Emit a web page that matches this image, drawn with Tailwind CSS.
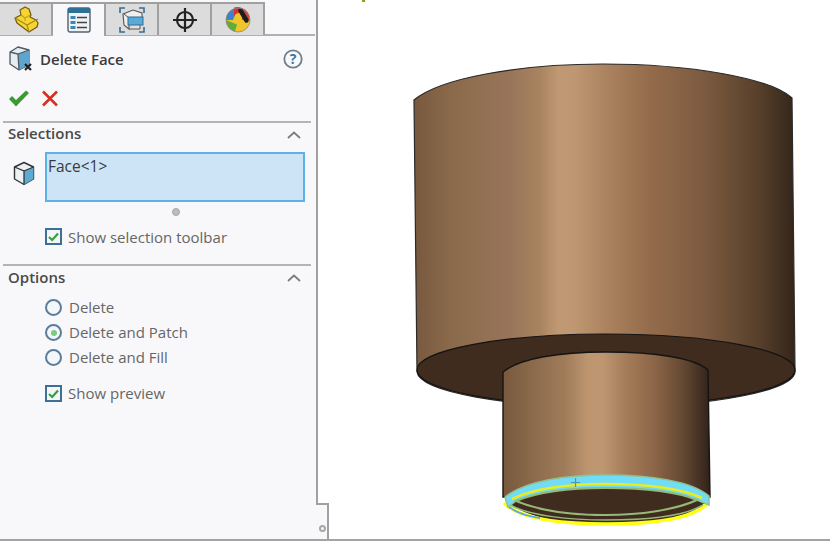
<!DOCTYPE html>
<html lang="en">
<head>
    <meta charset="UTF-8">
    <title>Delete Face</title>
    <script src="https://cdn.jsdelivr.net/npm/@tailwindcss/browser@4"></script>
</head>
<body class="bg-white">
    <div class="w-[830px] h-[541px] flex overflow-hidden border-b-2 border-[#a3a3a3] font-['Open_Sans','Noto_Sans',sans-serif] text-[#4a4a4a]">
        <!-- property manager -->
        <div class="w-[329px] flex flex-col shrink-0">
            <aside class="w-[318px] h-[503px] bg-[#f8f8fa] border-r-2 border-[#a0a0a0]">
                <!-- tabs -->
                <div class="h-[36px] pt-[2px] mr-[1px] flex border-b-2 border-[#b0b0b0]">
                    <div class="w-[53px] h-[33px] flex items-center justify-center bg-[#dcdcdc] border-t-2 border-r-2 border-[#a0a0a0]">
                        <svg width="26" height="27" viewBox="0 0 26 27"><path d="M2 12 L8 9 L7 4 L12 1 L16 3 L18 9 L17 11 L23 14 L25 17 L24 21 L16 26 L4 17 Z" fill="#f6d431" stroke="#6e5a12" stroke-width="1.2" stroke-linejoin="round"/><path d="M2 12 L14 19 L25 13 M14 19 L16 26" fill="none" stroke="#a98a16" stroke-width="1.2"/><path d="M8 9 L12 12 L17 9 M12 12 L12 15" fill="none" stroke="#c4a31e" stroke-width="1.2"/></svg>
                    </div>
                    <div class="w-[53px] h-[34px] flex items-center justify-center bg-[#f8f8fa] border-t-2 border-r-2 border-[#a0a0a0] relative z-10">
                        <svg width="24" height="26" viewBox="0 0 24 26"><rect x="1" y="1" width="22" height="24" rx="2" fill="#eef2f5" stroke="#55626c" stroke-width="1.4"/><rect x="1" y="1" width="22" height="5" fill="#2f6f96"/><rect x="3.500" y="9" width="5" height="3" fill="#3d86b5"/><rect x="3.500" y="14" width="5" height="3" fill="#3d86b5"/><rect x="3.500" y="19" width="5" height="3" fill="#3d86b5"/><path d="M10 10.500h10M10 15.500h10M10 20.500h10" stroke="#444" stroke-width="1.500"/></svg>
                    </div>
                    <div class="w-[53px] h-[33px] flex items-center justify-center bg-[#dcdcdc] border-t-2 border-r-2 border-[#a0a0a0]">
                        <svg width="26" height="26" viewBox="0 0 26 26"><path d="M1 6V1h5M20 1h5v5M25 20v5h-5M6 25H1v-5" fill="none" stroke="#2f6f96" stroke-width="1.6"/><path d="M4 7 L14 3 L23 6 L23 11 L10 11 L10 22 L5 18 Z" fill="#efefef" stroke="#555" stroke-width="1.1"/><path d="M5 7 L10 11" stroke="#555"/><path d="M10 22 L21 22 L21 18" fill="#e4e4e4" stroke="#555"/><rect x="9" y="10" width="15" height="8" fill="#5aa9d8" stroke="#2f6f96"/></svg>
                    </div>
                    <div class="w-[53px] h-[33px] flex items-center justify-center bg-[#dcdcdc] border-t-2 border-r-2 border-[#a0a0a0]">
                        <svg width="26" height="26" viewBox="0 0 26 26"><circle cx="13" cy="13" r="8" fill="none" stroke="#222" stroke-width="2.2"/><path d="M13 1v24M1 13h24" stroke="#222" stroke-width="2.2"/></svg>
                    </div>
                    <div class="w-[53px] h-[33px] flex items-center justify-center bg-[#dcdcdc] border-t-2 border-r-2 border-[#a0a0a0]">
                        <svg width="26" height="26" viewBox="0 0 26 26"><circle cx="13" cy="13" r="12" fill="#efc52a"/><path d="M13 1a12 12 0 0 0-12 12h7z" fill="#3f82cf"/><path d="M1 13a12 12 0 0 0 9 11.600l2-7z" fill="#5fae3b"/><path d="M9 9a6 6 0 0 1 5-3l3-5a12 12 0 0 0-8-.4z" fill="#d8322c"/><path d="M17 1a12 12 0 0 1 8 12l-8 0z" fill="#d8443c"/><path d="M15.500 3.500l6 10" stroke="#1d1d1d" stroke-width="4.500" stroke-linecap="round"/><circle cx="13" cy="13" r="12" fill="none" stroke="#888" stroke-width=".8"/></svg>
                    </div>
                </div>
                <!-- title -->
                <div class="h-[46px] pl-[8px] pr-[13px] flex items-center">
                    <svg width="25" height="26" viewBox="0 0 25 26"><path d="M2 6 L10 1 L21 4 L21 19 L11 24 L2 18 Z" fill="#e6ecef" stroke="#4b5a64" stroke-width="1.300" stroke-linejoin="round"/><path d="M10 8 L21 4 L21 19 L11 24 Z" fill="#5fa4cd"/><path d="M2 6 L10 8 L11 24 M10 8 L21 4" fill="none" stroke="#4b5a64" stroke-width="1.300"/><path d="M17 18l6 6M23 18l-6 6" stroke="#222" stroke-width="2.200"/></svg>
                    <span class="ml-[7px] text-[15px] font-semibold text-[#3d3d3d]">Delete Face</span>
                    <svg class="ml-auto" width="20" height="20" viewBox="0 0 20 20"><circle cx="10" cy="10" r="8.700" fill="#f7f9fb" stroke="#6d7f8c" stroke-width="1.800"/><text x="10" y="15" text-anchor="middle" font-size="14" font-weight="700" fill="#3f76a6" font-family="Open Sans">?</text></svg>
                </div>
                <!-- ok / cancel -->
                <div class="h-[33px] pl-[8px] flex items-center gap-[12px]">
                    <svg width="21" height="17" viewBox="0 0 21 17"><path d="M1 9 L4 6 L8 10 L18 0.500 L21 3 L8 16.500 Z" fill="#3d9a32"/></svg>
                    <svg width="18" height="17" viewBox="0 0 18 17"><path d="M2 1.500 L16 15.500 M16 1.500 L2 15.500" stroke="#d8301e" stroke-width="2.600"/></svg>
                </div>
                <!-- selections -->
                <section class="mt-[6px] ml-[3px] mr-[5px] border-t-2 border-[#b4b4b4]">
                    <div class="h-[21px] pl-[5px] pr-[10px] flex items-center justify-between">
                        <h2 class="text-[15px] font-semibold text-[#4a4a4a]">Selections</h2>
                        <svg class="mt-[3px]" width="14" height="8" viewBox="0 0 14 8"><path d="M1 7 L7 1.500 L13 7" fill="none" stroke="#7b7b7b" stroke-width="1.700"/></svg>
                    </div>
                    <div class="mt-[8px] flex">
                        <svg class="ml-[10px] mt-[9px]" width="22" height="25" viewBox="0 0 22 25"><path d="M1.500 6 L11 1.500 L20.500 6 L20.500 18 L11 23.500 L1.500 18 Z" fill="#eef1f3" stroke="#333" stroke-width="1.400" stroke-linejoin="round"/><path d="M11 10 L20.500 6 L20.500 18 L11 23.500 Z" fill="#5fa9d3"/><path d="M1.500 6 L11 10 L11 23.500 M11 10 L20.500 6" fill="none" stroke="#333" stroke-width="1.300"/></svg>
                        <div class="ml-[10px] w-[260px] h-[50px] bg-[#cde4f7] border-2 border-[#5cb1e6] pl-[1px] text-[15.500px] leading-[25px] text-[#3a3a3a]">Face&lt;1&gt;</div>
                    </div>
                    <div class="h-[20px] flex items-center justify-center pl-[38px]">
                        <div class="w-[8px] h-[8px] rounded-full bg-[#bcbcbc] border border-[#a5a5a5]"></div>
                    </div>
                    <label class="mt-[6px] ml-[42px] h-[17px] flex items-center gap-[6px]">
                        <span class="w-[17px] h-[17px] flex items-center justify-center bg-[#f2f6f9] border-2 border-[#3e6f96]">
                            <svg width="11" height="10" viewBox="0 0 11 10"><path d="M1 5 L4.200 8 L10 1.500" fill="none" stroke="#35a03a" stroke-width="2.200"/></svg>
                        </span>
                        <span class="pt-[2px] text-[15px] text-[#666] whitespace-nowrap">Show selection toolbar</span>
                    </label>
                </section>
                <!-- options -->
                <section class="mt-[19px] ml-[3px] mr-[5px] border-t-2 border-[#b4b4b4]">
                    <div class="h-[23px] pl-[5px] pr-[10px] flex items-center justify-between">
                        <h2 class="text-[15px] font-semibold text-[#4a4a4a]">Options</h2>
                        <svg width="14" height="8" viewBox="0 0 14 8"><path d="M1 7 L7 1.500 L13 7" fill="none" stroke="#7b7b7b" stroke-width="1.700"/></svg>
                    </div>
                    <div class="mt-[6px] ml-[42px]">
                        <label class="h-[25px] flex items-center gap-[7px]">
                            <span class="w-[17px] h-[17px] rounded-full bg-[#f4f7fa] border-2 border-[#5a7d9c]"></span>
                            <span class="text-[15px] text-[#666]">Delete</span>
                        </label>
                        <label class="h-[25px] flex items-center gap-[7px]">
                            <span class="w-[17px] h-[17px] rounded-full bg-[#f4f7fa] border-2 border-[#5a7d9c] flex items-center justify-center">
                                <span class="w-[6px] h-[6px] rounded-full bg-[#7ccb7e]"></span>
                            </span>
                            <span class="text-[15px] text-[#666]">Delete and Patch</span>
                        </label>
                        <label class="h-[25px] flex items-center gap-[7px]">
                            <span class="w-[17px] h-[17px] rounded-full bg-[#f4f7fa] border-2 border-[#5a7d9c]"></span>
                            <span class="text-[15px] text-[#666]">Delete and Fill</span>
                        </label>
                        <label class="mt-[15px] h-[17px] flex items-center gap-[6px]">
                            <span class="w-[17px] h-[17px] flex items-center justify-center bg-[#f2f6f9] border-2 border-[#3e6f96]">
                                <svg width="11" height="10" viewBox="0 0 11 10"><path d="M1 5 L4.200 8 L10 1.500" fill="none" stroke="#35a03a" stroke-width="2.200"/></svg>
                            </span>
                            <span class="text-[15px] text-[#666]">Show preview</span>
                        </label>
                    </div>
                </section>
            </aside>
            <!-- resize corner -->
            <div class="flex-1 flex">
                <div class="w-[316px] bg-[#f8f8fa]"></div>
                <div class="w-[13px] bg-[#f8f8fa] border-t-2 border-r-2 border-[#a0a0a0] flex items-end justify-end pr-[1px] pb-[7px]">
                    <div class="w-[7px] h-[7px] rounded-full border-2 border-[#a8a8a8]"></div>
                </div>
            </div>
        </div>

        <!-- graphics area -->
        <main class="flex-1">
            <svg width="501" height="539" viewBox="329 0 501 539" class="block">
                <defs>
                    <linearGradient id="big" gradientUnits="userSpaceOnUse" x1="414" y1="0" x2="794" y2="0">
                        <stop offset="0" stop-color="#78593e"/>
                        <stop offset=".1" stop-color="#8b6a4b"/>
                        <stop offset=".25" stop-color="#98755a"/>
                        <stop offset=".33" stop-color="#a88360"/>
                        <stop offset=".38" stop-color="#c09873"/>
                        <stop offset=".42" stop-color="#bf9873"/>
                        <stop offset=".5" stop-color="#ac8461"/>
                        <stop offset=".62" stop-color="#946c4c"/>
                        <stop offset=".76" stop-color="#7d5b40"/>
                        <stop offset=".9" stop-color="#59412c"/>
                        <stop offset="1" stop-color="#35261a"/>
                    </linearGradient>
                    <linearGradient id="small" gradientUnits="userSpaceOnUse" x1="503" y1="0" x2="710" y2="0">
                        <stop offset="0" stop-color="#78593e"/>
                        <stop offset=".14" stop-color="#8b6a4b"/>
                        <stop offset=".3" stop-color="#a07c5a"/>
                        <stop offset=".41" stop-color="#bd9670"/>
                        <stop offset=".48" stop-color="#be9772"/>
                        <stop offset=".58" stop-color="#a87f5c"/>
                        <stop offset=".74" stop-color="#8a6446"/>
                        <stop offset=".88" stop-color="#604631"/>
                        <stop offset="1" stop-color="#30221a"/>
                    </linearGradient>
                </defs>
                <!-- upper cylinder -->
                <path d="M414 100 C440 78 520 64 603 64 C690 64 770 78 792 98 L795 370 A189 36 0 0 1 417 372 Z" fill="url(#big)" stroke="#2a2a2a" stroke-width="1.200"/>
                <ellipse cx="606" cy="370" rx="189" ry="36" fill="#3f2c1e" stroke="#141414" stroke-width="1.200"/>
                <!-- lower cylinder -->
                <path d="M503 372 C520 358 560 352 606 352 C655 352 695 358 708 370 L710 497 L503 497 Z" fill="url(#small)" stroke="#141414" stroke-width="1.400"/>
                <!-- end face, highlighted -->
                <path d="M505 500 C525 518 565 525 606 525 C650 525 692 518 708 500 C690 490 650 487 606 487 C560 487 525 490 505 500 Z" fill="#3f2c1e"/>
                <path d="M504 503 C520 519 562 524 606 524 C652 524 695 519 709 502" fill="none" stroke="#ffff14" stroke-width="3.500"/>
                <path d="M508 506 C516 513 526 516 540 518" fill="none" stroke="#5aa8e8" stroke-width="1.800"/>
                <path d="M510 505 C530 516 570 520 606 520 C650 520 685 516 703 505" fill="none" stroke="#96b878" stroke-width="1.500"/>
                <path d="M505 497 C525 481 565 475 606 475 C650 475 692 481 709 496 L709 505 L697 500 C670 491 640 488 606 488 C565 488 538 492 516 501 L508 507 Z" fill="#6fdcf8" stroke="#93c18c" stroke-width="1.500"/>
                <path d="M512 499 C535 488 570 484 606 484 C645 484 680 488 702 498" fill="none" stroke="#ecec1e" stroke-width="2.500"/>
                <path d="M516 501 C540 491 570 488 606 488 C645 488 675 491 697 500 C675 510 640 515 606 515 C570 515 540 511 516 501 Z" fill="#3f2c1e" stroke="#96b878" stroke-width="2"/>
                <path d="M575.500 478v9M571 482.500h9" stroke="#4f92c4" stroke-width="1.200"/>
                <path d="M362 0h3v2h-3z" fill="#9a9a20"/>
            </svg>
        </main>
    </div>
</body>
</html>
